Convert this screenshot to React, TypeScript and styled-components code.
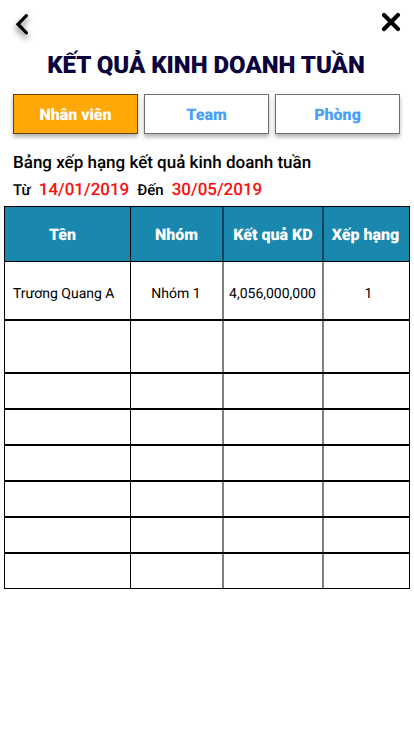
import React from "react";
import styled, { createGlobalStyle } from "styled-components";

const GlobalStyle = createGlobalStyle`
  *, *::before, *::after { box-sizing: border-box; }
  body {
    margin: 0;
    background: #fff;
    color: #000;
    font-family: Roboto, "Noto Sans", sans-serif;
    text-rendering: geometricPrecision;
  }
`;

const Page = styled.main`
  display: flex;
  flex-direction: column;
`;

const TopBar = styled.header`
  display: flex;
  justify-content: space-between;
  padding: 4px 3px 0;
`;

const IconButton = styled.button`
  width: 40px;
  height: 40px;
  padding: 0;
  border: 0;
  background: none;
  cursor: pointer;

  svg { display: block; overflow: visible; }
`;

const ShadowIcon = styled.svg`
  filter: drop-shadow(0 4px 3px rgba(0, 0, 0, 0.6));
`;

const Title = styled.h1`
  margin: 7px 0 0;
  padding-right: 2px;
  color: #0c033e;
  font-size: 24px;
  font-weight: 900;
  line-height: 28px;
  text-align: center;
`;

const Tabs = styled.nav`
  display: grid;
  grid-template-columns: repeat(3, 1fr);
  gap: 6px;
  margin: 15px 14px 0 13px;
`;

const Tab = styled.button<{ $active?: boolean }>`
  height: 40px;
  padding: 0;
  border: 1px solid ${(p) => (p.$active ? "#664303" : "#707070")};
  background: ${(p) => (p.$active ? "#ffa808" : "#fff")};
  color: ${(p) => (p.$active ? "#fff" : "#479ff8")};
  box-shadow: 0 3px 4px rgba(0, 0, 0, 0.3);
  font: 900 16px Roboto, "Noto Sans", sans-serif;
  text-rendering: inherit;
  cursor: pointer;
`;

const Summary = styled.section`
  padding: 17px 13px 0;
  font-weight: 500;
`;

const Subtitle = styled.h2`
  margin: 0;
  font-size: 17px;
  font-weight: 500;
  line-height: 24px;
`;

const Period = styled.p`
  display: flex;
  align-items: baseline;
  gap: 8px;
  margin: 3px 0 4px;
  font-size: 15px;
  line-height: 24px;
`;

const DateText = styled.time`
  color: #fa0f0f;
  font-size: 17px;
`;

const TableArea = styled.div`
  padding: 0 4px;
`;

const Table = styled.table`
  width: 100%;
  table-layout: fixed;
  border-collapse: separate;
  border-spacing: 0;
`;

const Column = styled.col<{ $width?: number }>`
  width: ${(p) => (p.$width ? `${p.$width}px` : "auto")};
`;

const columnLines = `
  &:nth-child(1) {
    border-left: 1px solid #000;
    border-right: 1px solid #000;
  }
  &:nth-child(2), &:nth-child(3) { box-shadow: inset -2px 0 rgba(0, 0, 0, 0.5); }
  &:nth-child(4) { border-right: 1px solid #000; }
`;

const HeadCell = styled.th`
  height: 56px;
  padding: 0 2px 0 0;
  border-top: 1px solid #000;
  border-bottom: 1px solid #000;
  background: #1a87ae;
  color: #fff;
  font-size: 16px;
  font-weight: 900;
  white-space: nowrap;
  ${columnLines}
  &:first-child { padding-right: 10px; }
`;

const BodyRow = styled.tr<{ $height: number }>`
  height: ${(p) => p.$height}px;
  &:last-child td { border-bottom-width: 1px; }
`;

const Cell = styled.td`
  padding: 6px 3px 0 0;
  border-bottom: 2px solid #000;
  font-size: 14px;
  text-align: center;
  white-space: nowrap;
  ${columnLines}
  &:first-child {
    padding-left: 8px;
    text-align: left;
  }
  &:last-child {
    padding-left: 4px;
    padding-right: 0;
  }
`;

const tabs = ["Nhân viên", "Team", "Phòng"];
const headings = ["Tên", "Nhóm", "Kết quả KD", "Xếp hạng"];
const blank = ["", "", "", ""];
const rows = [
  { height: 59, cells: ["Trương Quang A", "Nhóm 1", "4,056,000,000", "1"] },
  { height: 53, cells: blank },
  { height: 36, cells: blank },
  { height: 36, cells: blank },
  { height: 36, cells: blank },
  { height: 36, cells: blank },
  { height: 36, cells: blank },
  { height: 35, cells: blank },
];

export default function App() {
  return (
    <Page>
      <GlobalStyle />
      <TopBar>
        <IconButton aria-label="Quay lại">
          <ShadowIcon width="40" height="40" viewBox="0 0 40 40" fill="none">
            <path d="M23.4 11.6 15 20.2 23.4 28.8" stroke="#000" strokeWidth="3.2" strokeLinecap="round" />
          </ShadowIcon>
        </IconButton>
        <IconButton aria-label="Đóng">
          <svg width="40" height="40" viewBox="0 0 40 40" fill="none">
            <path d="M13 11 27 25M27 11 13 25" stroke="#000" strokeWidth="4.2" strokeLinecap="round" />
          </svg>
        </IconButton>
      </TopBar>
      <Title>KẾT QUẢ KINH DOANH TUẦN</Title>
      <Tabs>
        {tabs.map((label, i) => (
          <Tab key={label} $active={i === 0} aria-pressed={i === 0}>{label}</Tab>
        ))}
      </Tabs>
      <Summary>
        <Subtitle>Bảng xếp hạng kết quả kinh doanh tuần</Subtitle>
        <Period>
          <span>Từ</span>
          <DateText dateTime="2019-01-14">14/01/2019</DateText>
          <span>Đến</span>
          <DateText dateTime="2019-05-30">30/05/2019</DateText>
        </Period>
      </Summary>
      <TableArea>
        <Table>
          <colgroup>
            <Column $width={127} />
            <Column $width={93} />
            <Column $width={100} />
            <Column />
          </colgroup>
          <thead>
            <tr>{headings.map((h) => <HeadCell key={h} scope="col">{h}</HeadCell>)}</tr>
          </thead>
          <tbody>
            {rows.map((row, r) => (
              <BodyRow key={r} $height={row.height}>
                {row.cells.map((text, c) => <Cell key={c}>{text}</Cell>)}
              </BodyRow>
            ))}
          </tbody>
        </Table>
      </TableArea>
    </Page>
  );
}
